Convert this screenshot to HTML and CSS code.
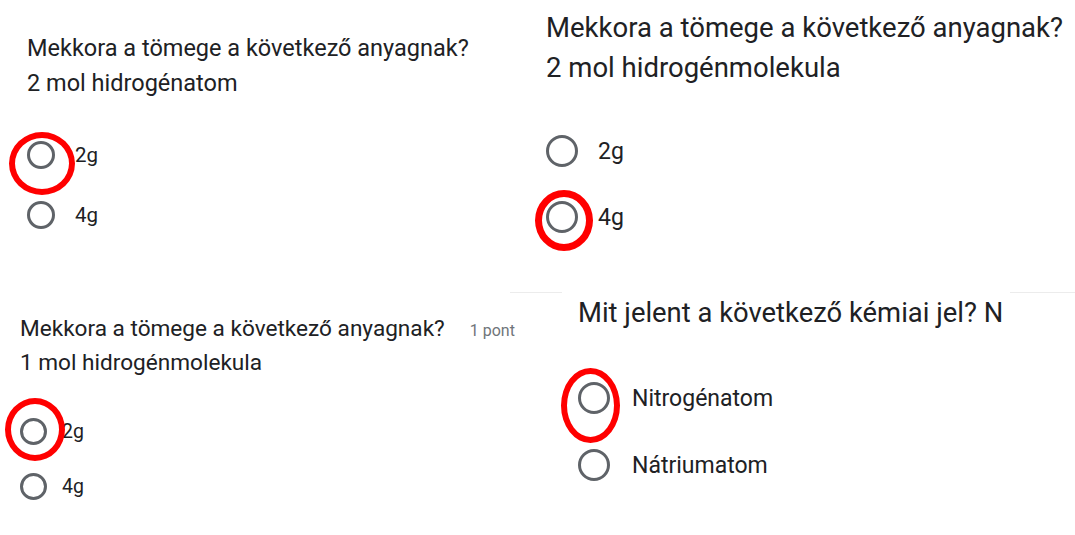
FILE: index.html
```html
<!DOCTYPE html>
<html lang="hu">
<head>
<meta charset="utf-8">
<title>Kémia kvíz</title>
<link rel="stylesheet" href="styles.css">
</head>
<body>
<main class="collage">
  <section class="panel p1">
    <div class="title">
      <div>Mekkora a tömege a következő anyagnak?</div>
      <div>2 mol hidrogénatom</div>
    </div>
    <ul class="options">
      <li class="opt"><span class="radio"><span class="ring"></span></span><span class="label">2g</span></li>
      <li class="opt"><span class="radio"></span><span class="label">4g</span></li>
    </ul>
  </section>

  <section class="panel p2">
    <div class="title">
      <div>Mekkora a tömege a következő anyagnak?</div>
      <div>2 mol hidrogénmolekula</div>
    </div>
    <ul class="options">
      <li class="opt"><span class="radio"></span><span class="label">2g</span></li>
      <li class="opt"><span class="radio"><span class="ring"></span></span><span class="label">4g</span></li>
    </ul>
  </section>

  <section class="panel p3">
    <div class="title">
      <div>Mekkora a tömege a következő anyagnak?<span class="points">1 pont</span></div>
      <div>1 mol hidrogénmolekula</div>
    </div>
    <ul class="options">
      <li class="opt"><span class="radio"><span class="ring"></span></span><span class="label">2g</span></li>
      <li class="opt"><span class="radio"></span><span class="label">4g</span></li>
    </ul>
  </section>

  <section class="panel p4">
    <div class="divider"></div>
    <div class="title">
      <div>Mit jelent a következő kémiai jel? N</div>
    </div>
    <ul class="options">
      <li class="opt"><span class="radio"><span class="ring"></span></span><span class="label">Nitrogénatom</span></li>
      <li class="opt"><span class="radio"></span><span class="label">Nátriumatom</span></li>
    </ul>
  </section>
</main>
</body>
</html>
```

FILE: styles.css
```css
html, body {
  margin: 0;
  padding: 0;
  background: #ffffff;
}

body {
  width: 1075px;
  height: 535px;
  overflow: hidden;
  font-family: Roboto, "Liberation Sans", Arial, sans-serif;
  color: #202124;
}

.collage {
  display: grid;
  grid-template-columns: 510px 565px;
  grid-template-rows: 270px 265px;
  width: 1075px;
  height: 535px;
}

.panel {
  box-sizing: border-box;
  display: flex;
  flex-direction: column;
}

.title {
  color: #202124;
  white-space: nowrap;
}

.options {
  list-style: none;
  margin: 0;
  padding: 0;
  display: flex;
  flex-direction: column;
}

.opt {
  display: flex;
  align-items: center;
}

.radio {
  position: relative;
  box-sizing: border-box;
  flex: none;
  border: 3px solid #5f6368;
  border-radius: 50%;
}

.ring {
  position: absolute;
  box-sizing: border-box;
  border: 6px solid #ff0000;
  border-radius: 50%;
}

.label {
  color: #202124;
  white-space: nowrap;
}

/* Panel 1 */
.p1 {
  padding: 31px 0 0 27px;
}
.p1 .title {
  font-size: 23.5px;
  line-height: 35px;
}
.p1 .options {
  margin-top: 40px;
  gap: 32px;
}
.p1 .radio {
  width: 28px;
  height: 28px;
}
.p1 .label {
  font-size: 20.5px;
  margin-left: 20px;
}
.p1 .ring {
  left: -21px;
  top: -12px;
  width: 66px;
  height: 63px;
}

/* Panel 2 */
.p2 {
  padding: 8px 0 0 36px;
}
.p2 .title {
  font-size: 27.5px;
  line-height: 40px;
}
.p2 .options {
  margin-top: 47px;
  gap: 34px;
}
.p2 .radio {
  width: 32px;
  height: 32px;
}
.p2 .label {
  font-size: 23px;
  margin-left: 20px;
}
.p2 .ring {
  left: -14px;
  top: -14px;
  width: 58px;
  height: 61px;
  border-width: 7px;
}

/* Panel 3 */
.p3 {
  padding: 43px 0 0 20px;
}
.p3 .title {
  font-size: 22.6px;
  line-height: 32px;
}
.p3 .points {
  font-size: 16px;
  color: #70757a;
  margin-left: 25px;
}
.p3 .options {
  margin-top: 39px;
  gap: 28px;
}
.p3 .radio {
  width: 27px;
  height: 27px;
}
.p3 .label {
  font-size: 19.5px;
  margin-left: 15px;
}
.p3 .ring {
  left: -18px;
  top: -23px;
  width: 60px;
  height: 63px;
}

/* Panel 4 */
.p4 {
  padding: 22px 0 0 68px;
}
.p4 .divider {
  height: 1px;
  margin-left: -68px;
  background: linear-gradient(to right, #ececec 0, #ececec 52px, transparent 52px, transparent calc(100% - 65px), #ececec calc(100% - 65px));
}
.p4 .title {
  font-size: 27.4px;
  line-height: 40px;
}
.p4 .options {
  margin-top: 49px;
  gap: 35px;
}
.p4 .radio {
  width: 32px;
  height: 32px;
}
.p4 .label {
  font-size: 23px;
  margin-left: 22px;
}
.p4 .ring {
  left: -20px;
  top: -17px;
  width: 59px;
  height: 75px;
}
```
